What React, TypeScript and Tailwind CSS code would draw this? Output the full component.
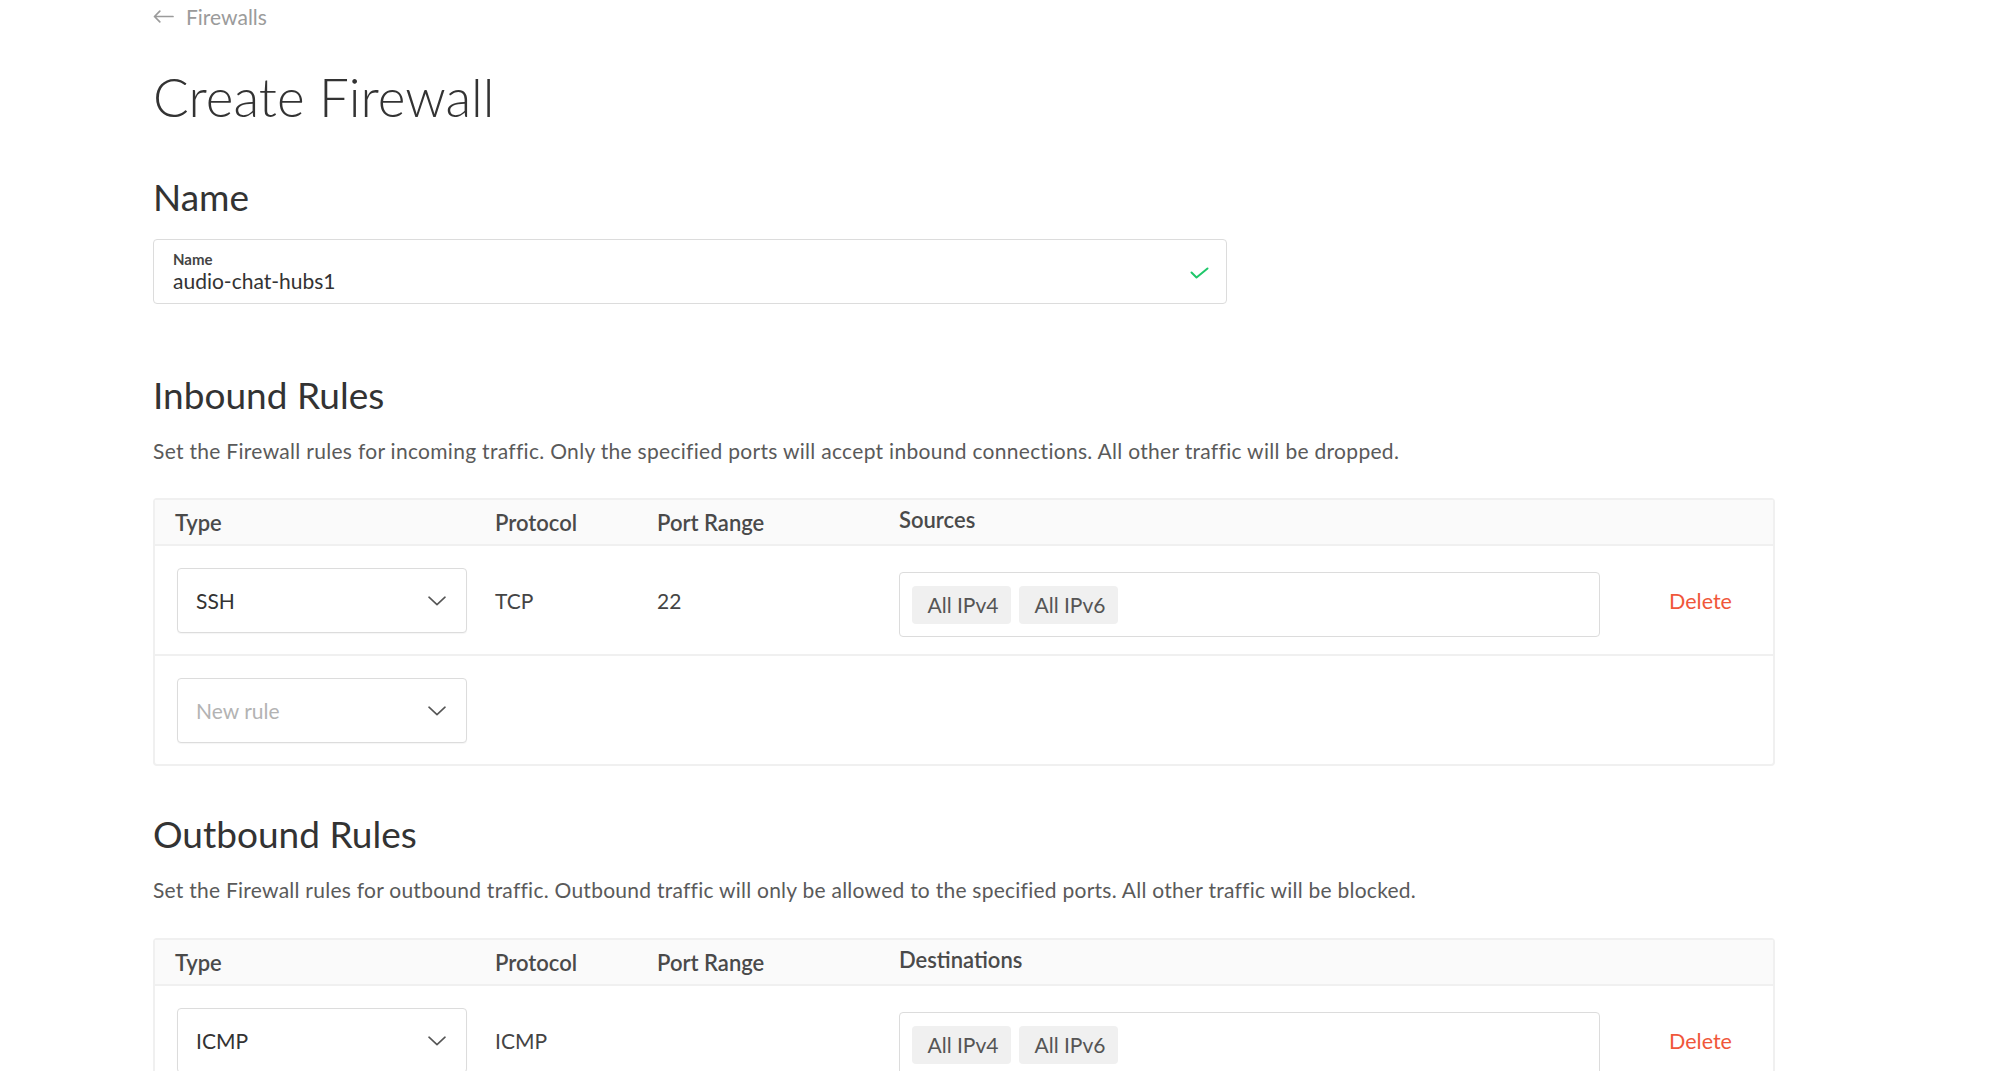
import React from "react";

const font = { fontFamily: "Lato, 'Liberation Sans', sans-serif" };

function Chevron() {
  return (
    <svg width="18" height="10" viewBox="0 0 18 10" fill="none">
      <path d="M1 1.2 L9 8.6 L17 1.2" stroke="#555" strokeWidth="1.6" strokeLinecap="round" strokeLinejoin="round" />
    </svg>
  );
}

function Select({ value, placeholder }: { value?: string; placeholder?: string }) {
  return (
    <div className="flex h-[65px] w-[290px] items-center justify-between rounded-[4px] border border-[#dcdcdc] bg-white pl-[18px] pr-[20px] shadow-[0_1px_1px_rgba(0,0,0,0.04)]">
      {value ? (
        <span className="text-[21px] text-[#333]">{value}</span>
      ) : (
        <span className="text-[21px] text-[#b3b3b3]">{placeholder}</span>
      )}
      <Chevron />
    </div>
  );
}

function Tag({ children }: { children: React.ReactNode }) {
  return (
    <span className="flex h-[38px] w-[99px] items-center justify-center rounded-[4px] bg-[#f0f0f0] pl-[3px] text-[21px] text-[#555]">
      {children}
    </span>
  );
}

function RuleTable({
  target,
  type,
  protocol,
  port,
}: {
  target: string;
  type: string;
  protocol: string;
  port: string;
}) {
  return (
    <div className="w-[1622px] rounded-[4px] border-2 border-[#f0f0f0] bg-white">
      <div className="flex h-[46px] items-center border-b-2 border-[#f0f0f0] bg-[#fafafa] pl-[20px] text-[22px] font-semibold text-[#4a4a4a]">
        <div className="w-[320px]">Type</div>
        <div className="w-[162px]">Protocol</div>
        <div className="w-[242px]">Port Range</div>
        <div className="-mt-[5px]">{target}</div>
      </div>
      <div className="flex items-center border-b-2 border-[#f0f0f0] pb-[21px] pl-[22px] pt-[22px]">
        <div className="w-[318px]">
          <Select value={type} />
        </div>
        <div className="w-[162px] text-[21px] text-[#444]">{protocol}</div>
        <div className="w-[242px] text-[21px] text-[#444]">{port}</div>
        <div className="flex h-[65px] w-[701px] translate-y-[4px] items-center gap-[8px] rounded-[4px] border border-[#dcdcdc] pl-[12px]">
          <Tag>All IPv4</Tag>
          <Tag>All IPv6</Tag>
        </div>
        <div className="ml-[69px] translate-y-[1px] text-[21.5px] text-[#f0573a]">Delete</div>
      </div>
      <div className="flex items-center pb-[21px] pl-[22px] pt-[22px]">
        <Select placeholder="New rule" />
      </div>
    </div>
  );
}

export default function App() {
  return (
    <div className="h-[1071px] w-full overflow-hidden bg-white" style={font}>
      <div className="pl-[153px]">
        <div className="flex h-[24px] items-center gap-[12px] pt-[9px] text-[21px] text-[#9b9b9b]">
          <svg width="21" height="13" viewBox="0 0 21 13" fill="none">
            <path d="M20 6.5 H1.5 M6.8 1.2 L1.5 6.5 L6.8 11.8" stroke="#9b9b9b" strokeWidth="1.7" strokeLinecap="round" strokeLinejoin="round" />
          </svg>
          <span>Firewalls</span>
        </div>

        <h1 className="mt-[43px] h-[60px] text-[53px] font-light leading-[60px] text-[#333]">Create Firewall</h1>

        <h2 className="mt-[48px] h-[44px] text-[37px] leading-[44px] text-[#333]">Name</h2>
        <div className="mt-[20px] flex h-[65px] w-[1074px] items-center justify-between rounded-[4px] border border-[#dcdcdc] pl-[19px] pr-[17px]">
          <div className="flex flex-col">
            <span className="text-[15px] font-bold leading-[18px] text-[#444]">Name</span>
            <span className="text-[21px] leading-[26px] text-[#333]">audio-chat-hubs1</span>
          </div>
          <svg width="19" height="12" viewBox="0 0 19 12" fill="none" className="mt-[2px]">
            <path d="M1.5 5.5 L6.5 10.5 L17.5 1.5" stroke="#1fc76a" strokeWidth="2" strokeLinecap="round" strokeLinejoin="round" />
          </svg>
        </div>

        <h2 className="mt-[69px] h-[44px] text-[37px] leading-[44px] text-[#333]">Inbound Rules</h2>
        <p className="mt-[20px] h-[28px] text-[21px] leading-[28px] tracking-[0.3px] text-[#5a5a5a]">
          Set the Firewall rules for incoming traffic. Only the specified ports will accept inbound connections. All other traffic will be dropped.
        </p>
        <div className="mt-[33px]">
          <RuleTable target="Sources" type="SSH" protocol="TCP" port="22" />
        </div>

        <h2 className="mt-[46px] h-[44px] text-[37px] leading-[44px] text-[#333]">Outbound Rules</h2>
        <p className="mt-[20px] h-[28px] text-[21px] leading-[28px] tracking-[0.25px] text-[#5a5a5a]">
          Set the Firewall rules for outbound traffic. Outbound traffic will only be allowed to the specified ports. All other traffic will be blocked.
        </p>
        <div className="mt-[34px]">
          <RuleTable target="Destinations" type="ICMP" protocol="ICMP" port="" />
        </div>
      </div>
    </div>
  );
}
